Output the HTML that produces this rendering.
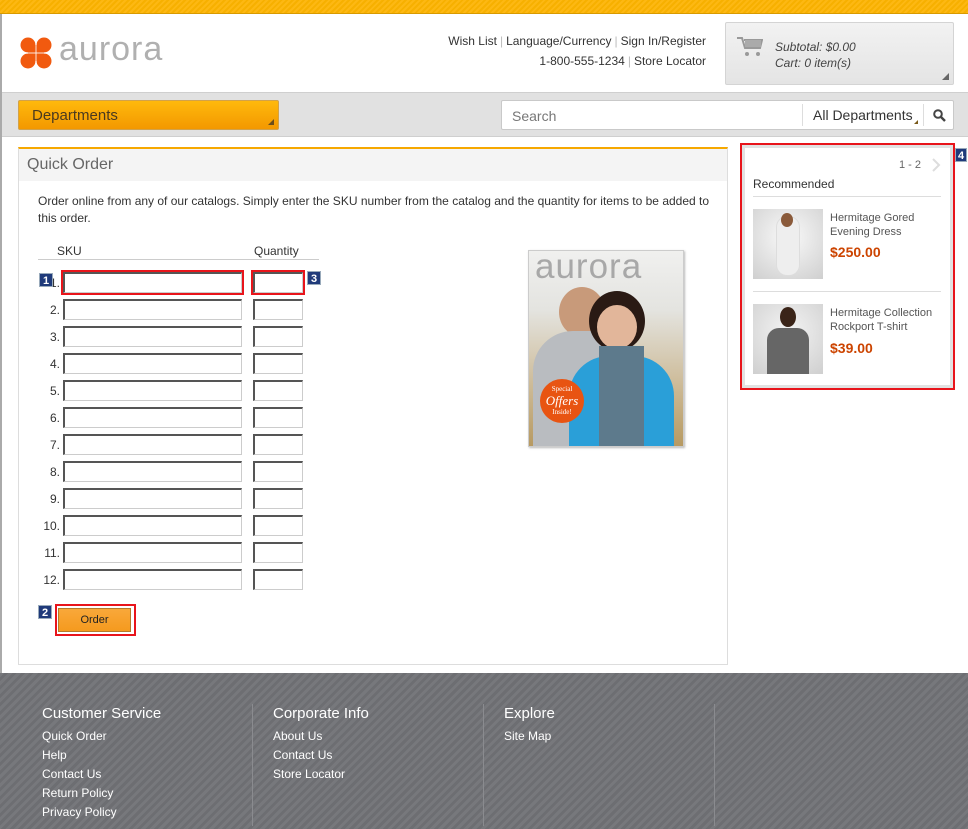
<!DOCTYPE html>
<html><head><meta charset="utf-8"><style>
*{box-sizing:border-box;margin:0;padding:0}
body{width:968px;height:829px;overflow:hidden;font-family:"Liberation Sans",sans-serif;background:#fff;position:relative;color:#333}
.a{position:absolute}
.top{left:0;top:0;width:968px;height:14px;background:repeating-linear-gradient(135deg,#fdb813 0 2px,#f7b000 2px 4px);border-bottom:1px solid #d89a00}
.lstrip{left:0;top:14px;width:2px;height:659px;background:#aaa}
.links{right:262px;font-size:12px;color:#333;text-align:right}
.links span{color:#bbb;margin:0 3px}
.inp{background:#fff;border:1px solid #999;border-top:2px solid #555;border-left:2px solid #555;border-right:1px solid #ccc;border-bottom:1px solid #ccc;height:21px}
.num{font-size:12px;width:24px;text-align:right;left:36px}
.badge{background:#1f3a7a;color:#fff;font-size:11px;font-weight:bold;width:14px;height:14px;text-align:center;line-height:14px;border:1px solid #9ab}
.foot{left:0;top:673px;width:968px;height:156px;background:repeating-linear-gradient(135deg,#77787c 0 3px,#6d6e72 3px 6px)}
.fh{font-size:15px;color:#fff}
.fl{font-size:12px;color:#fff;line-height:19px}
.vl{width:1px;background:#8a8b8f;top:704px;height:122px}
</style></head><body>
<div class="a top"></div>
<div class="a lstrip"></div>
<svg class="a" style="left:20px;top:37px" width="32" height="32" viewBox="0 0 32 32">
<g fill="#f15a0f"><circle cx="8" cy="8" r="7.5"/><circle cx="24" cy="8" r="7.5"/><circle cx="8" cy="24" r="7.5"/><circle cx="24" cy="24" r="7.5"/><rect x="8" y="8" width="16" height="16"/></g>
<rect x="15.3" y="2" width="1.4" height="28" fill="#fff" opacity=".6"/><rect x="2" y="15.3" width="28" height="1.4" fill="#fff" opacity=".6"/></svg>
<div class="a" style="left:59px;top:30px;font-size:34px;color:#b0b0b0;letter-spacing:1px">aurora</div>
<div class="a links" style="top:34px">Wish List<span>|</span>Language/Currency<span>|</span>Sign In/Register</div>
<div class="a links" style="top:54px">1-800-555-1234<span>|</span>Store Locator</div>
<div class="a" style="left:725px;top:22px;width:229px;height:63px;background:linear-gradient(#f2f2f2,#e4e4e4);border:1px solid #d4d4d4;border-radius:2px"></div>
<svg class="a" style="left:737px;top:37px" width="26" height="20" viewBox="0 0 26 20"><path d="M0 1h5l3 10h15l2-8H7" fill="none" stroke="#999" stroke-width="2"/><rect x="8" y="3" width="16" height="7" fill="#aaa"/><circle cx="10" cy="17" r="2" fill="#999"/><circle cx="21" cy="17" r="2" fill="#999"/></svg>
<div class="a" style="left:775px;top:39px;font-size:12px;font-style:italic;color:#444;line-height:16px">Subtotal: $0.00<br>Cart: 0 item(s)</div>
<div class="a" style="left:942px;top:73px;width:0;height:0;border-left:7px solid transparent;border-bottom:7px solid #666"></div>
<div class="a" style="left:2px;top:92px;width:966px;height:45px;background:#e1e1e1;border-top:1px solid #cfcfcf;border-bottom:1px solid #cfcfcf"></div>
<div class="a" style="left:18px;top:100px;width:261px;height:30px;background:linear-gradient(#ffb90c,#f39800);border:1px solid #d2a24a;border-radius:2px;font-size:15px;color:#4a3a20;padding:6px 13px">Departments</div>
<div class="a" style="left:268px;top:119px;border-left:6px solid transparent;border-bottom:6px solid #6b4d1a"></div>
<div class="a" style="left:501px;top:100px;width:453px;height:30px;background:#fff;border:1px solid #c9c9c9;border-radius:2px"></div>
<div class="a" style="left:512px;top:108px;font-size:14px;color:#777">Search</div>
<div class="a" style="left:802px;top:104px;width:1px;height:22px;background:#ddd"></div>
<div class="a" style="left:813px;top:107px;font-size:14px;color:#333">All Departments</div>
<div class="a" style="left:914px;top:120px;border-left:4px solid transparent;border-bottom:4px solid #7a5a1a"></div>
<div class="a" style="left:923px;top:104px;width:1px;height:22px;background:#ddd"></div>
<svg class="a" style="left:933px;top:109px" width="13" height="13" viewBox="0 0 13 13"><circle cx="5" cy="5" r="3.8" fill="none" stroke="#444" stroke-width="2"/><path d="M8 8l4 4" stroke="#444" stroke-width="2.4"/></svg>
<div class="a" style="left:18px;top:147px;width:710px;height:518px;border:1px solid #ddd;border-top:2px solid #f6a800"></div>
<div class="a" style="left:19px;top:149px;width:708px;height:32px;background:#f4f4f4"></div>
<div class="a" style="left:27px;top:156px;font-size:16px;color:#666">Quick Order</div>
<div class="a" style="left:38px;top:193px;width:680px;font-size:12px;line-height:17px;color:#333">Order online from any of our catalogs. Simply enter the SKU number from the catalog and the quantity for items to be added to this order.</div>
<div class="a" style="left:57px;top:244px;font-size:12px">SKU</div>
<div class="a" style="left:254px;top:244px;font-size:12px">Quantity</div>
<div class="a" style="left:38px;top:259px;width:281px;height:1px;background:#ccc"></div>
<div id="rows"></div>
<script>
var h='';for(var i=0;i<12;i++){var y=272+i*27;
h+='<div class="a num" style="top:'+(y+4)+'px">'+(i+1)+'.</div><div class="a inp" style="left:63px;top:'+y+'px;width:179px"></div><div class="a inp" style="left:253px;top:'+y+'px;width:50px"></div>';}
document.getElementById('rows').innerHTML=h;
</script>
<div class="a" style="left:61px;top:270px;width:183px;height:25px;border:2px solid #e8141b"></div>
<div class="a" style="left:251px;top:270px;width:54px;height:25px;border:2px solid #e8141b"></div>
<div class="a badge" style="left:39px;top:273px">1</div>
<div class="a badge" style="left:307px;top:271px">3</div>
<div class="a badge" style="left:38px;top:605px">2</div>
<div class="a" style="left:55px;top:604px;width:81px;height:32px;border:2px solid #e8141b"></div>
<div class="a" style="left:58px;top:608px;width:73px;height:24px;background:linear-gradient(#f9a83a,#f59a1e);border:1px solid #b47a2a;font-size:11px;color:#222;text-align:center;line-height:22px">Order</div>
<div class="a" style="left:528px;top:250px;width:156px;height:197px;border:1px solid #ccc;background:linear-gradient(#f0f0ef,#e4e4e0 30%,#c9b48c 75%,#b79a62);overflow:hidden;box-shadow:1px 1px 2px #bbb">
<div class="a" style="left:30px;top:36px;width:46px;height:50px;border-radius:50%;background:#c89a7a"></div>
<div class="a" style="left:4px;top:80px;width:110px;height:120px;border-radius:40px 40px 0 0;background:#b9bcc0"></div>
<div class="a" style="left:60px;top:40px;width:56px;height:60px;border-radius:50%;background:#2a1a14"></div>
<div class="a" style="left:68px;top:54px;width:40px;height:44px;border-radius:50%;background:#e2b69a"></div>
<div class="a" style="left:40px;top:105px;width:105px;height:95px;border-radius:40px 40px 0 0;background:#2a9fd8"></div>
<div class="a" style="left:70px;top:95px;width:45px;height:100px;background:#5d7a8c"></div>
<div class="a" style="left:6px;top:-4px;font-size:35px;color:#a8a8a8;letter-spacing:1px">aurora</div>
<div class="a" style="left:11px;top:128px;width:44px;height:44px;border-radius:50%;background:#e85412;color:#fff;font-family:'Liberation Serif',serif;text-align:center;font-size:7px;line-height:9px;padding-top:6px">Special<br><i style="font-size:13px;line-height:14px">Offers</i><br>Inside!</div>
</div>
<div class="a" style="left:740px;top:143px;width:215px;height:247px;border:2px solid #e8141b;background:#e2e2e2;padding:3px"><div style="background:#fff;width:100%;height:100%"></div></div>
<div class="a badge" style="left:955px;top:148px;width:12px">4</div>
<div class="a" style="left:899px;top:159px;font-size:11px;color:#666">1 - 2</div>
<svg class="a" style="left:932px;top:158px" width="9" height="14"><path d="M1 1l6 6-6 6" fill="none" stroke="#ddd" stroke-width="2"/></svg>
<div class="a" style="left:753px;top:177px;font-size:12px;color:#333">Recommended</div>
<div class="a" style="left:753px;top:196px;width:188px;height:1px;background:#ddd"></div>
<div class="a" style="left:753px;top:209px;width:70px;height:70px;background:radial-gradient(circle at 50% 40%,#fafafa,#cfcfcf)"><div class="a" style="left:24px;top:8px;width:22px;height:58px;border-radius:10px;background:#eee;box-shadow:0 0 0 1px #ddd"></div><div class="a" style="left:28px;top:4px;width:12px;height:14px;border-radius:50%;background:#8a5a3a"></div></div>
<div class="a" style="left:830px;top:211px;font-size:11px;color:#555;line-height:14px">Hermitage Gored<br>Evening Dress</div>
<div class="a" style="left:830px;top:244px;font-size:14px;font-weight:bold;color:#cc4400">$250.00</div>
<div class="a" style="left:753px;top:291px;width:188px;height:1px;background:#ddd"></div>
<div class="a" style="left:753px;top:304px;width:70px;height:70px;background:radial-gradient(circle at 50% 40%,#f4f4f4,#cfcfcf)"><div class="a" style="left:14px;top:24px;width:42px;height:46px;border-radius:12px 12px 0 0;background:#666"></div><div class="a" style="left:27px;top:3px;width:16px;height:20px;border-radius:50%;background:#3a2418"></div></div>
<div class="a" style="left:830px;top:306px;font-size:11px;color:#555;line-height:14px">Hermitage Collection<br>Rockport T-shirt</div>
<div class="a" style="left:830px;top:340px;font-size:14px;font-weight:bold;color:#cc4400">$39.00</div>
<div class="a foot"></div>
<div class="a vl" style="left:252px"></div><div class="a vl" style="left:483px"></div><div class="a vl" style="left:714px"></div>
<div class="a fh" style="left:42px;top:705px">Customer Service</div>
<div class="a fl" style="left:42px;top:727px">Quick Order<br>Help<br>Contact Us<br>Return Policy<br>Privacy Policy</div>
<div class="a fh" style="left:273px;top:705px">Corporate Info</div>
<div class="a fl" style="left:273px;top:727px">About Us<br>Contact Us<br>Store Locator</div>
<div class="a fh" style="left:504px;top:705px">Explore</div>
<div class="a fl" style="left:504px;top:727px">Site Map</div>
</body></html>
